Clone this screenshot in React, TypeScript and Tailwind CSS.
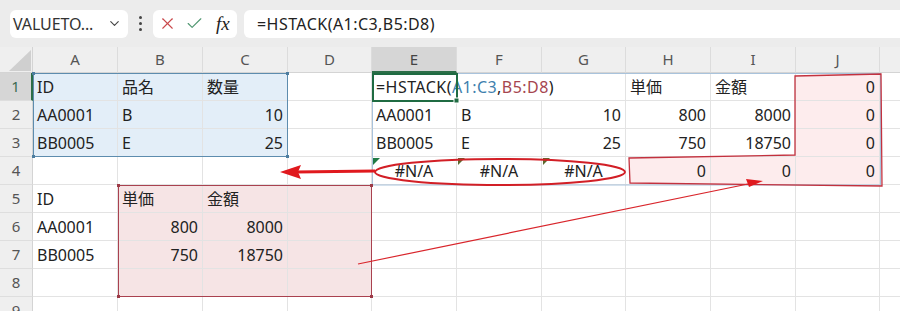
import React from "react";
import { ChevronDown, X, Check } from "lucide-react";

type Cell = { v: React.ReactNode; r?: boolean; c?: boolean; cls?: string };

const cells: Record<string, Cell> = {
  A1: { v: "ID" }, B1: { v: "品名" }, C1: { v: "数量" },
  A2: { v: "AA0001" }, B2: { v: "B" }, C2: { v: "10", r: true },
  A3: { v: "BB0005" }, B3: { v: "E" }, C3: { v: "25", r: true },
  A5: { v: "ID" }, B5: { v: "単価" }, C5: { v: "金額" },
  A6: { v: "AA0001" }, B6: { v: "800", r: true }, C6: { v: "8000", r: true },
  A7: { v: "BB0005" }, B7: { v: "750", r: true }, C7: { v: "18750", r: true },
  E1: {
    v: (
      <span className="tracking-[0.45px]">
        =HSTACK(<span className="text-[#3f7fae]">A1:C3</span>,
        <span className="text-[#a6464f]">B5:D8</span>)
      </span>
    ),
    cls: "overflow-visible z-10",
  },
  H1: { v: "単価" }, I1: { v: "金額" }, J1: { v: "0", r: true },
  E2: { v: "AA0001" }, F2: { v: "B" }, G2: { v: "10", r: true }, H2: { v: "800", r: true }, I2: { v: "8000", r: true }, J2: { v: "0", r: true },
  E3: { v: "BB0005" }, F3: { v: "E" }, G3: { v: "25", r: true }, H3: { v: "750", r: true }, I3: { v: "18750", r: true }, J3: { v: "0", r: true },
  E4: { v: "#N/A", c: true }, F4: { v: "#N/A", c: true }, G4: { v: "#N/A", c: true }, H4: { v: "0", r: true }, I4: { v: "0", r: true }, J4: { v: "0", r: true },
};

const letters = ["A", "B", "C", "D", "E", "F", "G", "H", "I", "J", "K"];
const noRightBorder = new Set(["E1", "F1"]);

export default function App() {
  const font = { fontFamily: '"Noto Sans", "Noto Sans CJK JP", sans-serif' };
  return (
    <div className="relative w-[900px] h-[311px] overflow-hidden bg-white text-[#222]" style={font}>
      {/* Toolbar */}
      <div className="h-[47px] bg-[#ececec] flex items-center pl-[10px]">
        <div className="w-[118px] h-[28px] bg-white rounded-[6px] flex items-center justify-between pl-[3px] pr-[6px]">
          <span className="text-[16px] text-[#333] tracking-[-0.1px]">VALUETO...</span>
          <ChevronDown size={15} strokeWidth={1.8} className="text-[#444]" />
        </div>
        <div className="w-[25px] flex flex-col items-center gap-[3px]">
          <div className="w-[3px] h-[3px] rounded-full bg-[#444]" />
          <div className="w-[3px] h-[3px] rounded-full bg-[#444]" />
          <div className="w-[3px] h-[3px] rounded-full bg-[#444]" />
        </div>
        <div className="w-[84px] h-[28px] bg-white rounded-[6px] flex items-center pl-[5px] gap-[8px]">
          <X size={19} strokeWidth={1.4} className="text-[#c9484b]" />
          <Check size={19} strokeWidth={1.4} className="text-[#4f9670]" />
          <span className="ml-[4px] text-[19px] italic font-normal text-[#222] leading-none" style={{ fontFamily: '"Liberation Serif", serif' }}>
            fx
          </span>
        </div>
        <div className="ml-[7px] flex-1 h-[28px] bg-white rounded-l-[6px] flex items-center pl-[13px]">
          <span className="text-[16px] text-[#222] tracking-[0.45px]">=HSTACK(A1:C3,B5:D8)</span>
        </div>
      </div>

      {/* Sheet */}
      <div className="relative">
        {/* fill layer */}
        <svg className="absolute left-0 top-0 z-0" width="900" height="264" viewBox="0 47 900 264">
          <rect x="33" y="73" width="255" height="84" fill="#e3eef8" />
          <rect x="118" y="185" width="254" height="112" fill="#f6e4e5" />
          <polygon points="795,76 881,74 882,186 630,183 629,158 795,155" fill="#fdeced" />
        </svg>

        <div className="relative z-10 grid grid-cols-[33px_85px_85px_85px_84px_85px_85px_84px_85px_85px_84px_85px] grid-rows-[26px_repeat(9,28px)]">
          {/* corner */}
          <div className="bg-[#efefef] border-b border-r border-[#d4d4d4] relative overflow-hidden">
            <svg className="absolute inset-0" width="33" height="26">
              <polygon points="31,3 31,24 9,24" fill="#cfcfcf" />
            </svg>
          </div>
          {letters.map((l) => (
            <div
              key={l}
              className={
                "flex items-center justify-center text-[15px] border-r border-[#dcdcdc] " +
                (l === "E"
                  ? "bg-[#d6d6d6] text-[#444] border-b-2 border-b-[#2c6e48]"
                  : "bg-[#efefef] text-[#555] border-b border-b-[#d4d4d4]")
              }
            >
              {l}
            </div>
          ))}
          {[1, 2, 3, 4, 5, 6, 7, 8, 9].map((r) => (
            <React.Fragment key={r}>
              <div
                className={
                  "flex items-center justify-center text-[15px] border-b border-[#dedede] " +
                  (r === 1
                    ? "bg-[#d6d6d6] text-[#3b6b52] border-r-2 border-r-[#2c6e48]"
                    : "bg-[#efefef] text-[#555] border-r border-r-[#d4d4d4]")
                }
              >
                {r}
              </div>
              {letters.map((l) => {
                const key = l + r;
                const c = cells[key];
                return (
                  <div
                    key={key}
                    className={
                      "flex items-center text-[16px] whitespace-nowrap px-[4px] border-b border-[#e3e3e3] " +
                      (noRightBorder.has(key) ? "" : "border-r ") +
                      (c?.r ? "justify-end " : c?.c ? "justify-center " : "justify-start ") +
                      (c?.cls ?? "overflow-hidden")
                    }
                  >
                    {c?.v}
                  </div>
                );
              })}
            </React.Fragment>
          ))}
        </div>

        {/* stroke layer */}
        <svg className="absolute left-0 top-0 z-20 pointer-events-none" width="900" height="264" viewBox="0 47 900 264">
          <rect x="372.5" y="73.5" width="508" height="111.5" fill="none" stroke="#a9c3dc" strokeWidth="1" />
          <polygon points="373,158 380,158 373,165" fill="#1f7a45" />
          <polygon points="458,158 465,158 458,165" fill="#5b6a2e" />
          <polygon points="543,158 550,158 543,165" fill="#5b6a2e" />
          <rect x="33.5" y="73.5" width="254" height="83" fill="none" stroke="#5d8cae" strokeWidth="1" />
          <rect x="32" y="72" width="3" height="3" fill="#4d7d9f" />
          <rect x="286" y="72" width="3" height="3" fill="#4d7d9f" />
          <rect x="32" y="155" width="3" height="3" fill="#4d7d9f" />
          <rect x="286" y="155" width="3" height="3" fill="#4d7d9f" />
          <rect x="118.5" y="185.5" width="253" height="111" fill="none" stroke="#a9414f" strokeWidth="1" />
          <rect x="117" y="184" width="3" height="3" fill="#9c3a47" />
          <rect x="370" y="184" width="3" height="3" fill="#9c3a47" />
          <rect x="117" y="295" width="3" height="3" fill="#9c3a47" />
          <rect x="370" y="295" width="3" height="3" fill="#9c3a47" />
          <rect x="373" y="74" width="84" height="27" fill="none" stroke="#1f6b42" strokeWidth="2" />
          <rect x="454" y="98" width="5" height="5" fill="#1f6b42" stroke="white" strokeWidth="1" />
          <polygon points="795,76 881,74 882,186 630,183 629,158 795,155" fill="none" stroke="#c3313e" strokeWidth="1.3" />
          <ellipse cx="500" cy="172" rx="125" ry="13" fill="none" stroke="#d21f26" strokeWidth="2" />
          <line x1="375" y1="171" x2="296" y2="172" stroke="#e0191e" strokeWidth="3" />
          <polygon points="280,172 301,165 298,172 301,179" fill="#e0191e" />
          <line x1="358" y1="264" x2="748" y2="184" stroke="#d9252b" strokeWidth="1.2" />
          <polygon points="763,181 746,179 749,187" fill="#e0191e" />
        </svg>
      </div>
    </div>
  );
}
